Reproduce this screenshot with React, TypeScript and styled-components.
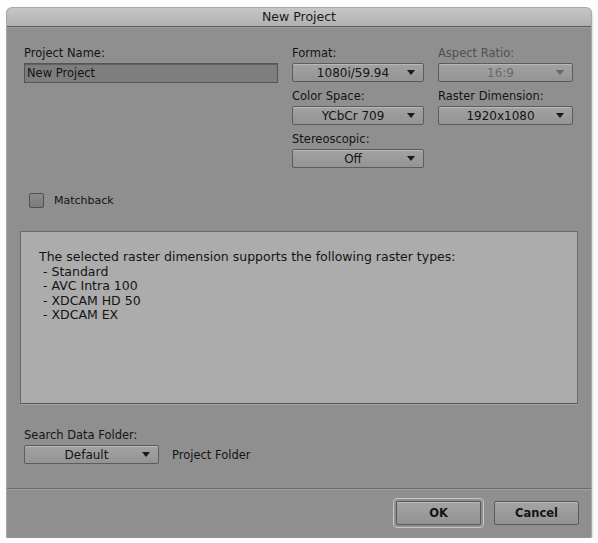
import React from 'react';
import styled, { createGlobalStyle } from 'styled-components';

const GlobalStyle = createGlobalStyle`
  html, body {
    margin: 0;
    padding: 0;
    background: #fdfdfd;
  }
  body {
    font-family: "DejaVu Sans", Verdana, sans-serif;
    font-size: 11.5px;
    color: #141414;
  }
`;

type SelectProps = {
  value: string;
  width: number;
  disabled?: boolean;
};

const Select: React.FC<SelectProps> = ({ value, width, disabled }) => (
  <SelectBox style={{ width }} $disabled={disabled}>
    <SelectValue>{value}</SelectValue>
    <Arrow $disabled={disabled} />
  </SelectBox>
);

const Field: React.FC<{ label: string; disabled?: boolean; children: React.ReactNode }> = ({
  label,
  disabled,
  children,
}) => (
  <FieldBox>
    <Label $disabled={disabled}>{label}</Label>
    {children}
  </FieldBox>
);

const App: React.FC = () => {
  const rasterTypes = ['Standard', 'AVC Intra 100', 'XDCAM HD 50', 'XDCAM EX'];

  return (
    <>
      <GlobalStyle />
      <Window>
        <TitleBar>New Project</TitleBar>
        <Body>
          <TopGrid>
            <Field label="Project Name:">
              <NameInput>New Project</NameInput>
            </Field>
            <Column>
              <Field label="Format:">
                <Select value="1080i/59.94" width={132} />
              </Field>
              <Field label="Color Space:">
                <Select value="YCbCr 709" width={132} />
              </Field>
              <Field label="Stereoscopic:">
                <Select value="Off" width={132} />
              </Field>
            </Column>
            <Column>
              <Field label="Aspect Ratio:" disabled>
                <Select value="16:9" width={135} disabled />
              </Field>
              <Field label="Raster Dimension:">
                <Select value="1920x1080" width={135} />
              </Field>
            </Column>
          </TopGrid>

          <CheckRow>
            <CheckBox />
            <span>Matchback</span>
          </CheckRow>

          <InfoPanel>
            <div>The selected raster dimension supports the following raster types:</div>
            {rasterTypes.map((type) => (
              <InfoItem key={type}>- {type}</InfoItem>
            ))}
          </InfoPanel>

          <FolderBlock>
            <Label>Search Data Folder:</Label>
            <FolderRow>
              <Select value="Default" width={135} />
              <span>Project Folder</span>
            </FolderRow>
          </FolderBlock>
        </Body>

        <Footer>
          <FocusRing>
            <Button>OK</Button>
          </FocusRing>
          <Button>Cancel</Button>
        </Footer>
      </Window>
    </>
  );
};

const Window = styled.div`
  margin: 8px 0 0 7px;
  width: 584px;
  height: 530px;
  display: flex;
  flex-direction: column;
  background: #8f8f8f;
  border-radius: 5px 5px 2px 2px;
  box-shadow: 0 0 0 1px #a8a8a8, 1px 2px 3px rgba(0, 0, 0, 0.25);
  overflow: hidden;
`;

const TitleBar = styled.div`
  height: 18px;
  line-height: 18px;
  text-align: center;
  font-size: 12.5px;
  color: #1a1a1a;
  background: linear-gradient(#c4c6c8, #aeb0b2);
  border-bottom: 1px solid #5a5a5a;
  box-shadow: 0 1px 0 #a0a0a0;
`;

const Body = styled.div`
  flex: 1;
  padding: 19px 13px 0;
  display: flex;
  flex-direction: column;
`;

const TopGrid = styled.div`
  display: grid;
  grid-template-columns: 254px 132px 135px;
  column-gap: 14px;
  margin-left: 4px;
  align-items: start;
`;

const Column = styled.div`
  display: flex;
  flex-direction: column;
  gap: 7px;
`;

const FieldBox = styled.div`
  display: flex;
  flex-direction: column;
`;

const Label = styled.div<{ $disabled?: boolean }>`
  line-height: 14px;
  margin-bottom: 3px;
  color: ${(p) => (p.$disabled ? '#505050' : '#141414')};
`;

const NameInput = styled.div`
  height: 18px;
  line-height: 18px;
  padding-left: 2px;
  background: #7e7e7e;
  border: 1px solid #555;
  box-shadow: inset 0 1px 1px rgba(0, 0, 0, 0.25);
`;

const SelectBox = styled.div<{ $disabled?: boolean }>`
  position: relative;
  box-sizing: border-box;
  height: 19px;
  display: flex;
  align-items: center;
  justify-content: center;
  font-size: 12px;
  background: linear-gradient(#a2a2a2, #949494);
  border: 1px solid #5c5c5c;
  border-radius: 2px;
  box-shadow: inset 0 1px 0 rgba(255, 255, 255, 0.25);
  color: ${(p) => (p.$disabled ? '#6a6a6a' : '#141414')};
`;

const SelectValue = styled.span`
  margin-right: 10px;
`;

const Arrow = styled.span<{ $disabled?: boolean }>`
  position: absolute;
  right: 8px;
  top: 6px;
  width: 0;
  height: 0;
  border-left: 4px solid transparent;
  border-right: 4px solid transparent;
  border-top: 5px solid ${(p) => (p.$disabled ? '#666' : '#1a1a1a')};
`;

const CheckRow = styled.div`
  display: flex;
  align-items: center;
  gap: 10px;
  margin: 25px 0 0 9px;
  height: 15px;
  font-size: 11px;
`;

const CheckBox = styled.span`
  box-sizing: border-box;
  width: 15px;
  height: 15px;
  background: linear-gradient(#8a8a8a, #7c7c7c);
  border: 1px solid #505050;
  border-radius: 2px;
`;

const InfoPanel = styled.div`
  margin-top: 23px;
  height: 173px;
  box-sizing: border-box;
  padding: 18px 18px;
  font-size: 12.5px;
  line-height: 14.5px;
  background: #acacac;
  border: 1px solid #6a6a6a;
  border-bottom-color: #555;
  box-shadow: 0 1px 0 #a2a2a2;
`;

const InfoItem = styled.div`
  padding-left: 4px;
`;

const FolderBlock = styled.div`
  margin: 24px 0 0 4px;
`;

const FolderRow = styled.div`
  display: flex;
  align-items: center;
  gap: 13px;
`;

const Footer = styled.div`
  height: 50px;
  box-sizing: border-box;
  display: flex;
  align-items: center;
  justify-content: flex-end;
  gap: 10px;
  padding: 0 12px 2px 0;
  border-top: 1px solid #6a6a6a;
  box-shadow: inset 0 1px 0 #a0a0a0;
`;

const FocusRing = styled.div`
  padding: 2px;
  border: 1px solid #c8c8c8;
  border-radius: 4px;
`;

const Button = styled.div`
  box-sizing: border-box;
  width: 85px;
  height: 24px;
  display: flex;
  align-items: center;
  justify-content: center;
  font-weight: bold;
  font-size: 11.5px;
  background: linear-gradient(#a4a4a4, #939393);
  border: 1px solid #5a5a5a;
  border-radius: 2px;
  box-shadow: inset 0 1px 0 rgba(255, 255, 255, 0.25);
`;

export default App;
